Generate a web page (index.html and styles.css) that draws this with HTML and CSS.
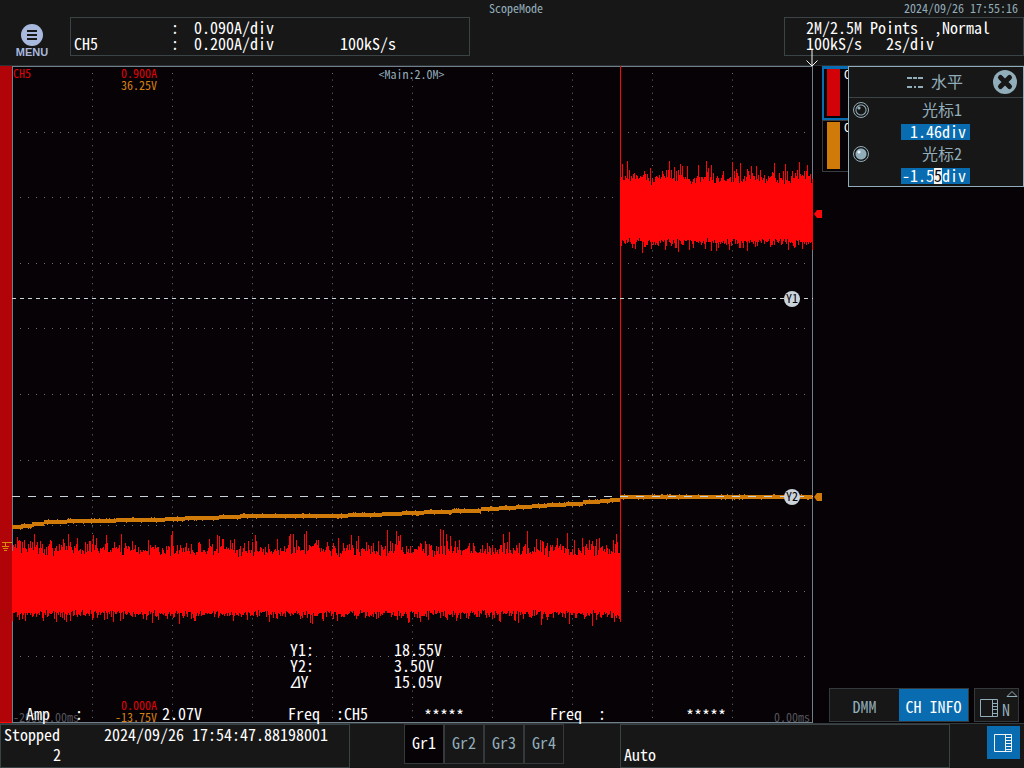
FILE: index.html
```
<!DOCTYPE html>
<html lang="zh-CN">
<head>
<meta charset="utf-8">
<title>ScopeMode</title>
<link rel="stylesheet" href="styles.css">
</head>
<body>
<div class="scope">
  <header class="header">
    <div class="titlebar">
      <span class="mode">ScopeMode</span>
      <time class="clock">2024/09/26 17:55:16</time>
    </div>
    <div class="infobar">
      <button class="menu" type="button">
        <svg class="menu-icon" viewBox="0 0 22 22"><circle cx="11" cy="11" r="11" fill="#a9b9dd"/><path d="M6 7h10M6 11h10M6 15h10" stroke="#171717" stroke-width="2"/></svg>
        <span>MENU</span>
      </button>
      <div class="box channel">
        <span></span><span>:</span><span>0.090A/div</span><span></span>
        <span>CH5</span><span>:</span><span>0.200A/div</span><span>100kS/s</span>
      </div>
      <div class="box acquisition"><div>2M/2.5M Points  ,Normal</div><div>100kS/s   2s/div</div></div>
    </div>
  </header>

  <main class="main">
    <div class="strip">
      <svg class="ground" viewBox="0 0 10 10"><path d="M0 .5h10M3.500 0v5M0 4.500h7M1 6.500h5M2 8.500h3" stroke="#dc8a0a" fill="none" shape-rendering="crispEdges"/></svg>
    </div>
    <section class="plot">
      <svg id="waves" class="waves" viewBox="0 0 801 657" preserveAspectRatio="none"></svg>
      <span class="cursor-badge badge-one">Y1</span>
      <span class="cursor-badge badge-two">Y2</span>
      <svg class="trigger" viewBox="0 0 12 17"><path d="M6 0v16M.5 10.500L6 16l5.500-5.500" fill="none" stroke="#f4f4f4"/></svg>
      <svg class="level level-red" viewBox="0 0 8 8"><path d="M0 4L3 0h5v8H3z" fill="#ff0508"/></svg>
      <svg class="level level-orange" viewBox="0 0 8 8"><path d="M0 4L3 0h5v8H3z" fill="#d07a0a"/></svg>
      <span class="note trace-name red">CH5</span>
      <div class="note scale-top"><div class="red">0.900A</div><div class="orange">36.25V</div></div>
      <div class="note main-label">&lt;Main:2.0M&gt;</div>
      <div class="cursor-values">
        <span>Y1:</span><span>18.55V</span>
        <span>Y2:</span><span>3.50V</span>
        <span><i class="delta">Δ</i>Y</span><span>15.05V</span>
      </div>
      <span class="note time-start">-20000.00ms</span>
      <div class="note scale-bottom"><div class="red">0.000A</div><div class="orange">-13.75V</div></div>
      <span class="note time-end">0.00ms</span>
      <div class="measures">
        <span>Amp</span><span>:</span><span>2.07V</span>
        <span>Freq</span><span>:CH5</span><span class="blank">*****</span>
        <span>Freq</span><span>:</span><span class="blank">*****</span>
      </div>
    </section>

    <aside class="side">
      <div class="channels">
        <button type="button" class="card selected"><i class="swatch swatch-red"></i><span>CH5</span></button>
        <button type="button" class="card"><i class="swatch swatch-orange"></i><span>CH6</span></button>
      </div>
      <form class="panel">
        <div class="panel-head">
          <svg class="lines-icon" viewBox="0 0 16 11"><path d="M0 1h5M6 1h4M11 1h5M0 10h5M7 10h2M11 10h5" stroke="#92adba" stroke-width="2"/></svg>
          <span>水平</span>
          <button type="button" class="close" aria-label="关闭"><svg viewBox="0 0 24 24"><circle cx="12" cy="12" r="12" fill="#92adba"/><path d="M7.500 7.500l9 9M16.500 7.500l-9 9" stroke="#171717" stroke-width="5" stroke-linecap="round"/></svg></button>
        </div>
        <div class="cursor-row">
          <input class="radio" type="radio" name="cursor" id="r1">
          <label for="r1">光标1</label>
          <input class="value" id="v1" value="1.46div" aria-label="光标1">
        </div>
        <div class="cursor-row">
          <input class="radio" type="radio" name="cursor" id="r2" checked>
          <label for="r2">光标2</label>
          <input class="value" id="v2" value="-1.55div" aria-label="光标2">
        </div>
      </form>
      <div class="side-tools">
        <div class="switch">
          <button type="button">DMM</button><button type="button" class="on">CH INFO</button>
        </div>
        <button type="button" class="layout">
          <svg viewBox="0 0 39 26" fill="none" stroke="#92adba"><path d="M.5 8.500h17v17H.5zM12.500 8.500v17M12 12.500h5M12 15.500h5M12 18.500h5M12 22.500h5M27 5.500L32 .5l5 5z"/></svg>
          <span>N</span>
        </button>
      </div>
    </aside>
  </main>

  <footer class="footer">
    <div class="status"><span>Stopped</span><time>2024/09/26 17:54:47.88198001</time><span class="count">2</span></div>
    <nav class="groups">
      <button type="button" class="active">Gr1</button><button type="button">Gr2</button><button type="button">Gr3</button><button type="button">Gr4</button>
    </nav>
    <div class="trigger-mode">Auto</div>
    <button type="button" class="toggle" aria-label="CH INFO"><svg viewBox="0 0 18 18" fill="none" stroke="#eef4f8"><path d="M.5 .5h17v17H.5zM11.500 0v18M12 3.500h6M12 6.500h6M12 9.500h6M12 12.500h6M12 15.500h6"/></svg></button>
  </footer>
</div>
<script src="script.js"></script>
</body>
</html>
```
FILE: styles.css
```
* { box-sizing: border-box; }
body {
  margin: 0;
  background: #060206;
  color: #ffffff;
  font-family: "Noto Sans CJK SC", "Liberation Mono", monospace;
  font-size: 16px;
  line-height: 16px;
  font-feature-settings: "hwid";
}
button, input { font: inherit; font-feature-settings: inherit; color: inherit; margin: 0; padding: 0; border: 0; background: none; }
svg { display: block; flex: none; }
.scope { min-height: 100vh; display: flex; flex-direction: column; }
.red { color: #e00208; }
.orange { color: #d88010; }

.header { background: #171717; padding-bottom: 9px; border-bottom: 1px solid #2c3032; }
.titlebar { display: grid; grid-template-columns: 1fr auto 1fr; height: 17px; padding: 0 6px 0 14px; font-size: 12px; color: #92adba; line-height: 16px; }
.mode { grid-column: 2; }
.clock { text-align: right; }
.infobar { display: flex; align-items: flex-start; }
.menu { width: 64px; margin: 7px 6px 0 0; display: flex; flex-direction: column; align-items: center; color: #a9b9dd; font: bold 11px/11px "Liberation Sans", sans-serif; }
.menu-icon { width: 22px; height: 22px; }
.menu span { padding-top: 1px; margin-bottom: -5px; }
.box { border: 1px solid #3a4447; height: 39px; padding: 1px 3px; white-space: pre; }
.channel { width: 400px; display: grid; grid-template-columns: 97px 23px 146px auto; grid-auto-rows: 16px; justify-content: start; }
.acquisition { width: 240px; margin-left: auto; padding-left: 21px; }

.main { flex: 1; display: grid; grid-template-columns: 12px 1fr 211px; }
.strip { background: #b00408; display: grid; align-content: end; justify-content: end; padding-bottom: 170px; border-bottom: 1px solid #ff0508; }
.ground { width: 10px; height: 10px; }
.plot { position: relative; min-height: 600px; border: 1px solid #6f7f8c; }
.waves { position: absolute; left: -1px; top: -1px; width: calc(100% + 2px); height: calc(100% + 2px); }
.grid-line { stroke: #68737e; stroke-width: 1; fill: none; }
.cursor-line { stroke: #c9d3d9; stroke-width: 1; }
.noise { fill: #ff0508; }
.ramp { fill: #d07a0a; }
.cursor-badge { position: absolute; right: 12px; width: 16px; height: 16px; margin-top: -8px; border-radius: 50%; background: #c9d3d9; color: #060206; font-size: 12px; line-height: 14px; text-align: center; }
.badge-one { top: 35.4%; }
.badge-two { top: 65.6%; }
.trigger { position: absolute; right: -6px; top: -17px; width: 12px; height: 17px; }
.level { position: absolute; left: 100%; margin: -4px 0 0 2px; width: 8px; height: 8px; }
.level-red { top: 22.4%; }
.level-orange { top: 65.6%; }
.note { position: absolute; font-size: 12px; line-height: 12px; }
.trace-name { left: 0; top: 0; }
.scale-top { left: 108px; top: 0; }
.main-label { left: 0; right: 2px; top: 1px; text-align: center; color: #92adba; }
.cursor-values { position: absolute; left: 277px; bottom: 33px; display: grid; grid-template-columns: 104px auto; }
.delta { font-style: italic; }
.scale-bottom { left: 102px; bottom: -1px; text-align: right; }
.time-start { left: 0; bottom: -1px; color: #55555a; }
.time-end { right: 2px; bottom: -1px; color: #55555a; }
.measures { position: absolute; left: 13px; bottom: 1px; display: grid; grid-template-columns: 49px 87px 126px 48px 88px 126px 48px 88px auto; }
.blank { line-height: 20px; height: 16px; }

.side { position: relative; display: flex; flex-direction: column; justify-content: space-between; }
.channels { margin-left: 9px; border-top: 1px solid #0a6cb0; }
.card { width: 100%; height: 52px; display: flex; align-items: flex-start; gap: 4px; padding: 1px 4px; border: 1px solid #3a3d40; font-size: 12px; line-height: 10px; }
.card.selected { height: 53px; border: 2px solid #0a6cb0; padding: 0 3px; }
.swatch { width: 13px; height: 47px; }
.swatch-red { background: #d20208; }
.swatch-orange { background: #d07a0a; }
.panel { position: absolute; top: 0; right: 0; width: 176px; height: 121px; background: #171717; border: 1px solid #92adba; color: #92adba; }
.panel-head { display: flex; align-items: center; height: 31px; padding: 0 6px 0 58px; gap: 8px; border-bottom: 1px solid #3a4447; }
.panel-head span { padding-bottom: 3px; }
.lines-icon { width: 16px; height: 11px; }
.close { width: 24px; height: 24px; margin-left: auto; }
.cursor-row { display: grid; grid-template-columns: 16px 1fr; justify-items: center; height: 44px; padding: 4px 4px 0; }
.cursor-row label { margin-right: 4px; height: 21px; line-height: 14px; }
.radio { appearance: none; width: 16px; height: 16px; border-radius: 50%; border: 1px solid #92adba; background: radial-gradient(circle at 5px 5px, #92adba 0 1px, transparent 2px), radial-gradient(circle, #171717 0 4px, #92adba 5px, #171717 6px); }
.radio:checked { background: radial-gradient(circle at 5px 5px, #e8f0f4 0 1px, transparent 2px), radial-gradient(circle, #92adba 0 5px, #171717 6px); }
.value { grid-column: 2; width: 69px; height: 16px; margin: -1px 17px 0 0; padding: 0 4px 3px 0; background: #0a6cb0; color: #ffffff; text-align: right; outline: 0; }
.value::selection { background: #f2f2f2; color: #060206; }
.side-tools { display: flex; justify-content: flex-end; gap: 5px; padding: 0 5px 1px 0; }
.switch { display: flex; border: 1px solid #34393b; background: #171717; }
.switch button { width: 69px; height: 32px; color: #92adba; padding-top: 2px; }
.switch .on { background: #0a6cb0; color: #ffffff; }
.layout { display: flex; align-items: flex-end; width: 45px; height: 34px; padding: 0 0 4px 5px; background: #171717; border: 1px solid #34393b; color: #92adba; }
.layout svg { width: 39px; height: 26px; }
.layout span { margin-left: -17px; }

.footer { background: #171717; border-top: 1px solid #34393b; display: grid; grid-template-columns: 350px 54px 160px 56px 330px 1fr; height: 45px; }
.status { border: 1px solid #3a4447; display: grid; grid-template-columns: 57px 1fr; column-gap: 43px; padding: 1px 3px; align-content: start; row-gap: 4px; }
.count { text-align: right; }
.groups { grid-column: 3; display: flex; }
.groups button { flex: 1; height: 40px; padding-bottom: 4px; border: 1px solid #34393b; color: #92adba; }
.groups .active { background: #060206; color: #ffffff; }
.trigger-mode { grid-column: 5; border: 1px solid #3a4447; padding: 21px 3px 0; }
.toggle { width: 33px; height: 33px; margin: 2px 4px 0 auto; padding: 8px 7px; background: #0a6cb0; }
.toggle svg { width: 18px; height: 18px; }
```
FILE: script.js
```
const svg = document.getElementById('waves');
const W = 801, H = 657;

function add(tag, attrs) {
  const el = document.createElementNS('http://www.w3.org/2000/svg', tag);
  for (const k in attrs) el.setAttribute(k, attrs[k]);
  svg.appendChild(el);
}

let seed = 7;
function rnd() {
  seed = (seed * 16807) % 2147483647;
  return seed / 2147483647;
}

// Graticule: ten by ten divisions, drawn as dots.
for (let i = 1; i < 10; i++) {
  add('path', { class: 'grid-line', d: `M${i * 80 + .5} 7V${H - 4}`, 'stroke-dasharray': '1 5.57' });
  add('path', { class: 'grid-line', d: `M8 ${Math.round(i * 65.6) + .5}H${W - 6}`, 'stroke-dasharray': '1 7' });
}

// Noise band: one column per pixel with random peaks.
function band(x0, x1, top, bottom) {
  let d = '';
  for (let x = x0; x < x1; x++) {
    const up = Math.min(20, Math.round(-Math.log(1 - rnd()) * 5));
    const down = Math.min(12, Math.round(-Math.log(1 - rnd()) * 3));
    const a = top - up + Math.round(rnd() * 8), b = bottom + down - Math.round(rnd() * 4);
    d += `M${x} ${a}h1V${b}h-1z`;
  }
  add('path', { class: 'noise', d, 'shape-rendering': 'crispEdges' });
}
band(0, 608, 483, 548);
band(609, 801, 111, 176);
add('path', { class: 'noise', d: 'M608 0h1V556h-1z' });

// Ramp: the level holds between steps, with a one-pixel ripple.
const steps = [[0, 459], [9, 458], [20, 456], [32, 454], [55, 453], [104, 452], [115, 452], [153, 451], [173, 450], [207, 449], [228, 448], [336, 447], [370, 446], [390, 445], [412, 444], [440, 443], [469, 441], [487, 440], [504, 439], [520, 438], [535, 437], [554, 436], [571, 434], [588, 433], [598, 432], [608, 429], [801, 428]];
let d = '', step = 0;
for (let x = 0; x < W; x++) {
  while (step < steps.length - 1 && steps[step + 1][0] <= x) step++;
  const y = steps[step][1] - (rnd() < .08 ? 1 : 0);
  d += `M${x} ${y}h1V${steps[step][1] + 4 + (rnd() < .08 ? 1 : 0)}h-1z`;
}
add('path', { class: 'ramp', d, 'shape-rendering': 'crispEdges' });

add('path', { class: 'cursor-line', d: `M0 232.5H${W}`, 'stroke-dasharray': '4 4' });
add('path', { class: 'cursor-line', d: `M0 430.5H${W}`, 'stroke-dasharray': '8 8' });

const active = document.getElementById('v2');
active.focus();
active.setSelectionRange(4, 5);
```
